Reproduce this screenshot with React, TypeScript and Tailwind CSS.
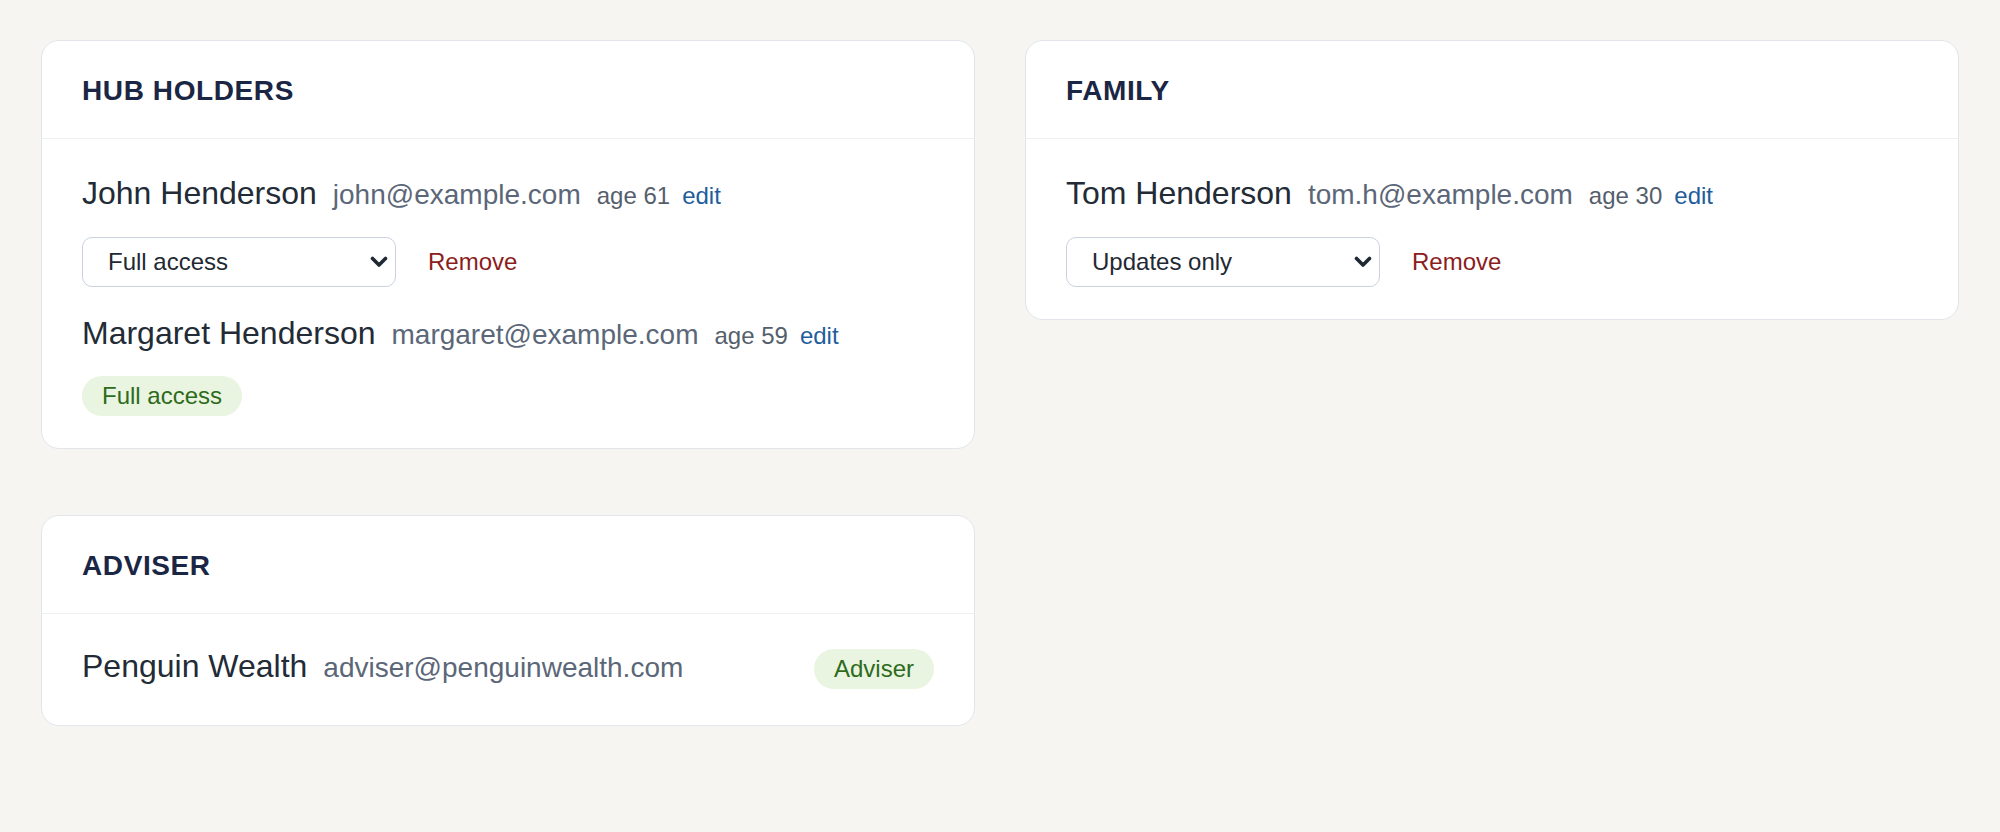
import React from "react";

const font = { fontFamily: '"Liberation Sans", Arial, sans-serif' };

function Chevron() {
  return (
    <svg
      width="18"
      height="12"
      viewBox="0 0 18 12"
      className="pointer-events-none absolute right-[8px] top-1/2 -translate-y-1/2"
      fill="none"
    >
      <path d="M2.5 2.5 L9 9 L15.5 2.5" stroke="#1f2933" strokeWidth="3.6" strokeLinecap="round" strokeLinejoin="round" />
    </svg>
  );
}

function AccessSelect({ value, options }: { value: string; options: string[] }) {
  return (
    <div className="relative h-[50px] w-[314px]">
      <select
        defaultValue={value}
        className="block h-[50px] w-full appearance-none rounded-[10px] border border-[#c9d1dc] bg-white pl-[25px] pr-10 text-[24px] leading-[28px] text-[#1f2933] outline-none"
        style={font}
      >
        {options.map((o) => (
          <option key={o}>{o}</option>
        ))}
      </select>
      <Chevron />
    </div>
  );
}

function NameLine({ name, email, age }: { name: string; email: string; age?: number }) {
  return (
    <div className="flex items-baseline">
      <span className="text-[32px] leading-[43px] text-[#222b36]">{name}</span>
      <span className="ml-4 text-[28px] leading-none text-[#5b6778]">{email}</span>
      {age !== undefined && <span className="ml-4 text-[24px] leading-none text-[#555f6c]">age {age}</span>}
      {age !== undefined && <a className="ml-3 cursor-pointer text-[24px] leading-none text-[#1f5d9c]">edit</a>}
    </div>
  );
}

function Badge({ children }: { children: React.ReactNode }) {
  return (
    <span className="inline-flex h-10 items-center rounded-full bg-[#e9f5e0] px-5 text-[24px] leading-[28px] text-[#2e6a1c]">
      {children}
    </span>
  );
}

function Card({ title, children, bodyClass = "pt-[33px]" }: { title: string; children: React.ReactNode; bodyClass?: string }) {
  return (
    <div className="overflow-hidden rounded-[18px] border border-[#e2e5eb] bg-white">
      <div className="border-b border-[#eef0f3] px-10 pt-[33px] pb-[31px]">
        <h2 className="text-[28px] font-bold leading-[33px] tracking-[0.6px] text-[#1a2643]">{title}</h2>
      </div>
      <div className={"px-10 pb-8 " + bodyClass}>{children}</div>
    </div>
  );
}

function Member({
  name,
  email,
  age,
  select,
}: {
  name: string;
  email: string;
  age: number;
  select: string;
}) {
  return (
    <div>
      <NameLine name={name} email={email} age={age} />
      <div className="mt-[22px] flex items-center">
        <AccessSelect value={select} options={["Full access", "Updates only"]} />
        <button className="ml-[32px] text-[24px] leading-[28px] text-[#8b1d1d]" style={font}>
          Remove
        </button>
      </div>
    </div>
  );
}

export default function App() {
  return (
    <div className="min-h-[832px] w-full bg-[#f6f5f1]" style={font}>
      <div className="grid grid-cols-2 items-start gap-x-[50px] gap-y-[66px] px-[41px] pt-10 pb-10">
        <Card title="HUB HOLDERS">
          <Member name="John Henderson" email="john@example.com" age={61} select="Full access" />
          <div className="mt-[25px]">
            <NameLine name="Margaret Henderson" email="margaret@example.com" age={59} />
            <div className="mt-[21px] flex">
              <Badge>Full access</Badge>
            </div>
          </div>
        </Card>
        <Card title="FAMILY">
          <Member name="Tom Henderson" email="tom.h@example.com" age={30} select="Updates only" />
        </Card>
        <Card title="ADVISER" bodyClass="pt-[31px]">
          <div className="flex h-[48px] items-center justify-between">
            <div className="self-start">
              <NameLine name="Penguin Wealth" email="adviser@penguinwealth.com" />
            </div>
            <Badge>Adviser</Badge>
          </div>
        </Card>
      </div>
    </div>
  );
}
